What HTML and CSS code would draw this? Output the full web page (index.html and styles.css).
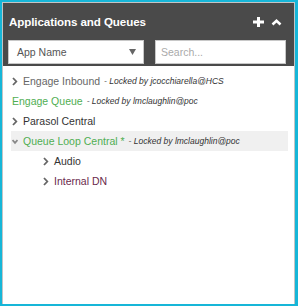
FILE: index.html
```html
<!DOCTYPE html>
<html lang="en">
<head>
  <meta charset="UTF-8">
  <title>Applications and Queues</title>
  <link rel="stylesheet" href="styles.css">
</head>
<body>

  <div class="panel">
    <div class="panel-inner">

      <!-- header -->
      <div class="panel-header">
        <div class="title-row">
          <span class="title">Applications and Queues</span>
          <div class="header-icons">
            <svg class="icon-plus" width="11" height="10" viewBox="0 0 11 10">
              <rect x="4" y="0" width="3" height="10" fill="#fff"/>
              <rect x="0" y="3.5" width="11" height="3" fill="#fff"/>
            </svg>
            <svg class="icon-up" width="11" height="7" viewBox="0 0 11 7">
              <path d="M1.5 5.5 L5.5 1.8 L9.5 5.5" fill="none" stroke="#fff" stroke-width="2.6"/>
            </svg>
          </div>
        </div>
        <div class="filters">
          <div class="select-box">
            <span>App Name</span>
            <svg class="caret" width="7" height="6" viewBox="0 0 7 6"><path d="M0 0 H7 L3.5 6 Z" fill="#666"/></svg>
          </div>
          <div class="search-box">Search...</div>
        </div>
      </div>

      <!-- list -->
      <ul class="tree">
        <li class="row">
          <svg class="arrow" width="6" height="9" viewBox="0 0 6 9"><path d="M1 1 L4.3 4.5 L1 8" fill="none" stroke="#666" stroke-width="1.8"/></svg>
          <span class="name gray">Engage Inbound</span>
          <span class="meta">- Locked by jcocchiarella@HCS</span>
        </li>
        <li class="row no-arrow">
          <span class="name green">Engage Queue</span>
          <span class="meta">- Locked by lmclaughlin@poc</span>
        </li>
        <li class="row">
          <svg class="arrow" width="6" height="9" viewBox="0 0 6 9"><path d="M1 1 L4.3 4.5 L1 8" fill="none" stroke="#666" stroke-width="1.8"/></svg>
          <span class="name dark">Parasol Central</span>
        </li>
        <li class="row selected">
          <svg class="arrow" width="6" height="9" viewBox="0 0 6 9"><path d="M0.5 3 L3 5.8 L5.5 3" fill="none" stroke="#888" stroke-width="1.8"/></svg>
          <span class="name green">Queue Loop Central *</span>
          <span class="meta">- Locked by lmclaughlin@poc</span>
        </li>
        <li class="row child">
          <svg class="arrow" width="6" height="9" viewBox="0 0 6 9"><path d="M1 1 L4.3 4.5 L1 8" fill="none" stroke="#666" stroke-width="1.8"/></svg>
          <span class="name dark">Audio</span>
        </li>
        <li class="row child">
          <svg class="arrow" width="6" height="9" viewBox="0 0 6 9"><path d="M1 1 L4.3 4.5 L1 8" fill="none" stroke="#666" stroke-width="1.8"/></svg>
          <span class="name maroon">Internal DN</span>
        </li>
      </ul>

    </div>
  </div>

</body>
</html>
```

FILE: styles.css
```css
body {
  margin: 0;
  padding: 0;
  font-family: 'Liberation Sans', Arial, sans-serif;
  background-color: #fff;
}

.panel {
  width: 298px;
  height: 306px;
  box-sizing: border-box;
  border-style: solid;
  border-color: #16b6d8;
  border-width: 2px 3px 2px 2px;
}

.panel-inner {
  height: 100%;
  box-sizing: border-box;
  border: 1px solid #c4c4c4;
  border-bottom: none;
  background-color: #fff;
}

.panel-header {
  background-color: #4a4a4a;
  padding: 0 8px 2px 5px;
}

.title-row {
  height: 37px;
  display: flex;
  align-items: center;
  justify-content: space-between;
}

.title {
  color: #fff;
  font-weight: bold;
  font-size: 11.6px;
  margin-left: 1px;
  letter-spacing: -0.1px;
}

.header-icons {
  display: flex;
  align-items: center;
  gap: 7px;
  margin-right: 4px;
}

.icon-up {
  margin-top: 1px;
}

.filters {
  display: flex;
  gap: 11px;
}

.select-box,
.search-box {
  flex: 1;
  height: 24px;
  box-sizing: border-box;
  background-color: #fff;
  border: 1px solid #c8c8c8;
  display: flex;
  align-items: center;
  font-size: 10.5px;
}

.select-box {
  justify-content: space-between;
  padding: 0 7px 0 8px;
  color: #555;
}

.search-box {
  padding: 0 5px;
  color: #aaa;
}

.tree {
  list-style: none;
  margin: 0;
  padding: 5px 6px 0 8px;
}

.row {
  height: 20px;
  display: flex;
  align-items: center;
  padding-left: 1px;
  white-space: nowrap;
}

.row.selected {
  background-color: #f0f0f0;
}

.row.child {
  padding-left: 32px;
}

.arrow {
  margin-right: 5px;
  flex-shrink: 0;
}

.name {
  font-size: 10.5px;
}

.gray {
  color: #666;
}

.green {
  color: #4fae52;
}

.dark {
  color: #333;
}

.maroon {
  color: #6a2a4c;
}

.meta {
  font-size: 8.5px;
  font-style: italic;
  color: #333;
  margin-left: 4px;
}
```
